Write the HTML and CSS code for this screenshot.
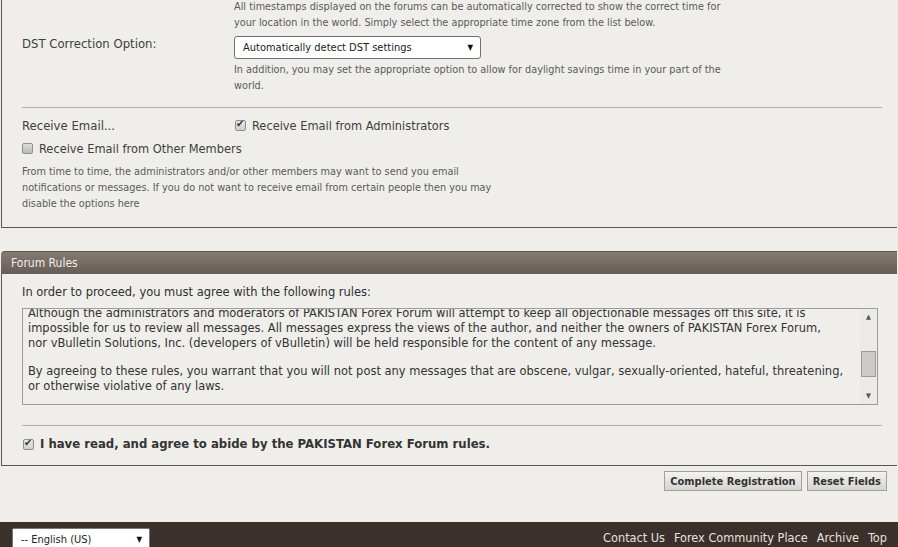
FILE: index.html
```html
<!DOCTYPE html>
<html lang="en">
<head>
    <meta charset="UTF-8">
    <title>Register</title>
    <link rel="stylesheet" href="styles.css">
</head>
<body>
    <div class="block block-top">
        <div class="row">
            <div class="row-label"></div>
            <div class="row-body">
                <p class="desc first">All timestamps displayed on the forums can be automatically corrected to show the correct time for<br>your location in the world. Simply select the appropriate time zone from the list below.</p>
            </div>
        </div>
        <div class="row row-dst">
            <div class="row-label">DST Correction Option:</div>
            <div class="row-body">
                <div class="select">Automatically detect DST settings<span class="arrow">&#9660;</span></div>
                <p class="desc">In addition, you may set the appropriate option to allow for daylight savings time in your part of the<br>world.</p>
            </div>
        </div>
        <hr class="sep">
        <div class="email">
            <span class="email-label">Receive Email...</span>
            <label class="check"><span class="box on"></span>Receive Email from Administrators</label>
            <label class="check check-other"><span class="box"></span>Receive Email from Other Members</label>
            <p class="desc email-desc">From time to time, the administrators and/or other members may want to send you email<br>notifications or messages. If you do not want to receive email from certain people then you may<br>disable the options here</p>
        </div>
    </div>

    <div class="rules-head">Forum Rules</div>
    <div class="block block-rules">
        <p class="intro">In order to proceed, you must agree with the following rules:</p>
        <div class="rules-box">
            <div class="rules-text">
                <p>Although the administrators and moderators of PAKISTAN Forex Forum will attempt to keep all objectionable messages off this site, it is<br>impossible for us to review all messages. All messages express the views of the author, and neither the owners of PAKISTAN Forex Forum,<br>nor vBulletin Solutions, Inc. (developers of vBulletin) will be held responsible for the content of any message.</p>
                <p>By agreeing to these rules, you warrant that you will not post any messages that are obscene, vulgar, sexually-oriented, hateful, threatening,<br>or otherwise violative of any laws.</p>
            </div>
            <div class="scrollbar">
                <span class="sb-btn">&#9650;</span>
                <span class="sb-track"><span class="sb-thumb"></span></span>
                <span class="sb-btn">&#9660;</span>
            </div>
        </div>
        <hr class="sep sep-rules">
        <label class="agree"><span class="box on"></span>I have read, and agree to abide by the PAKISTAN Forex Forum rules.</label>
    </div>

    <div class="actions">
        <button class="btn">Complete Registration</button>
        <button class="btn">Reset Fields</button>
    </div>

    <div class="footer">
        <div class="lang">-- English (US)<span class="arrow">&#9660;</span></div>
        <div class="links">
            <a href="#">Contact Us</a>
            <a href="#">Forex Community Place</a>
            <a href="#">Archive</a>
            <a href="#">Top</a>
        </div>
    </div>
</body>
</html>
```

FILE: styles.css
```css
body {
    margin: 0;
    background: #efeeeb;
    font-family: "DejaVu Sans Condensed", "Liberation Sans", sans-serif;
    color: #3e3e3e;
    overflow: hidden;
}

p {
    margin: 0;
}

.block {
    margin-left: 1px;
    width: 896px;
    border-left: 1px solid #5e5650;
    border-bottom: 1px solid #5e5650;
    box-sizing: border-box;
}

.block-top {
    padding: 0 16px 15px 20px;
}

.row {
    display: flex;
}

.row-label {
    width: 212px;
    flex: none;
    font-size: 13px;
}

.row-body {
    width: 520px;
}

.desc {
    font-size: 10.8px;
    line-height: 16px;
    color: #5a5a5a;
    white-space: nowrap;
}

.desc.first {
    margin-top: -1px;
}

.row-dst {
    margin-top: 5px;
}

.select {
    width: 247px;
    height: 23px;
    box-sizing: border-box;
    border: 1px solid #6f6f6f;
    border-radius: 3px;
    background: #fff;
    font-size: 11px;
    line-height: 21px;
    padding-left: 8px;
    color: #222;
    display: flex;
    justify-content: space-between;
}

.arrow {
    font-size: 8px;
    padding-right: 7px;
    color: #111;
}

.row-dst .desc {
    margin-top: 3px;
}

.sep {
    border: none;
    border-top: 1px solid #b0aeab;
    margin: 13px 0 0;
    width: 860px;
}

.email {
    padding-top: 8px;
    display: flex;
    flex-wrap: wrap;
    align-items: center;
}

.email-label {
    width: 213px;
    font-size: 13px;
}

.check {
    font-size: 12.7px;
    display: flex;
    align-items: center;
    height: 18px;
}

.check-other {
    width: 100%;
    margin-top: 5px;
}

.box {
    width: 11px;
    height: 11px;
    box-sizing: border-box;
    border: 1px solid #8f8f8f;
    border-radius: 2px;
    background: linear-gradient(#dcdcdc, #b9b9b9);
    margin-right: 6px;
    position: relative;
    flex: none;
}

.box.on {
    background: linear-gradient(#e8e8e8, #cfcfcf);
}

.box.on::after {
    content: "\2714";
    position: absolute;
    left: 0;
    top: -3px;
    font-family: "DejaVu Sans", sans-serif;
    font-size: 10px;
    color: #333;
}

.email-desc {
    margin-top: 7px;
    width: 100%;
}

.rules-head {
    margin: 23px 0 0 1px;
    width: 896px;
    height: 23px;
    box-sizing: border-box;
    background: linear-gradient(#867b73, #665c56);
    border-top: 1px solid #5a514b;
    border-radius: 4px 0 0 0;
    color: #f0ece8;
    font-size: 12px;
    line-height: 22px;
    padding-left: 10px;
}

.block-rules {
    padding: 10px 16px 14px 20px;
}

.intro {
    font-size: 12.75px;
    line-height: 16px;
    color: #2e2e2e;
}

.rules-box {
    margin-top: 8px;
    width: 856px;
    height: 97px;
    box-sizing: border-box;
    border: 1px solid #a09d99;
    display: flex;
    overflow: hidden;
}

.rules-text {
    flex: 1;
    padding: 0 2px 0 5px;
    margin-top: -4px;
    font-size: 12.75px;
    line-height: 15px;
    color: #333;
    white-space: nowrap;
    overflow: hidden;
}

.rules-text p {
    margin-bottom: 13px;
}

.scrollbar {
    width: 17px;
    flex: none;
    display: flex;
    flex-direction: column;
    background: #eceae6;
}

.sb-btn {
    height: 16px;
    font-size: 7px;
    line-height: 16px;
    text-align: center;
    color: #555;
}

.sb-track {
    flex: 1;
    padding-top: 26px;
}

.sb-thumb {
    display: block;
    margin: 0 1px;
    height: 24px;
    background: #cdcbc8;
    border: 1px solid #9e9b97;
}

.sep-rules {
    margin-top: 20px;
}

.agree {
    display: flex;
    align-items: center;
    margin-top: 11px;
    font-family: "DejaVu Sans", sans-serif;
    font-weight: bold;
    font-size: 11.7px;
    color: #333;
}

.agree .box {
    margin-left: 1px;
}

.actions {
    display: flex;
    justify-content: flex-end;
    gap: 5px;
    padding: 5px 11px 0 0;
}

.btn {
    font-family: "DejaVu Sans Condensed", sans-serif;
    font-weight: bold;
    font-size: 11px;
    color: #333;
    height: 20px;
    padding: 0 5px;
    border: 1px solid #a3a09c;
    background: linear-gradient(#f4f3f1, #d6d4d0);
}

.footer {
    margin-top: 31px;
    height: 26px;
    background: #3b302b;
    display: flex;
    justify-content: space-between;
    align-items: flex-end;
    padding: 0 11px 0 12px;
}

.lang {
    width: 138px;
    height: 20px;
    box-sizing: border-box;
    background: #fff;
    border: 1px solid #777;
    border-bottom: none;
    border-radius: 2px 2px 0 0;
    font-size: 11px;
    line-height: 22px;
    padding-left: 8px;
    color: #222;
    display: flex;
    justify-content: space-between;
}

.links {
    display: flex;
    gap: 9px;
    align-self: center;
    padding-top: 4px;
}

.links a {
    color: #e6e2de;
    text-decoration: none;
    font-size: 12.6px;
}
```
